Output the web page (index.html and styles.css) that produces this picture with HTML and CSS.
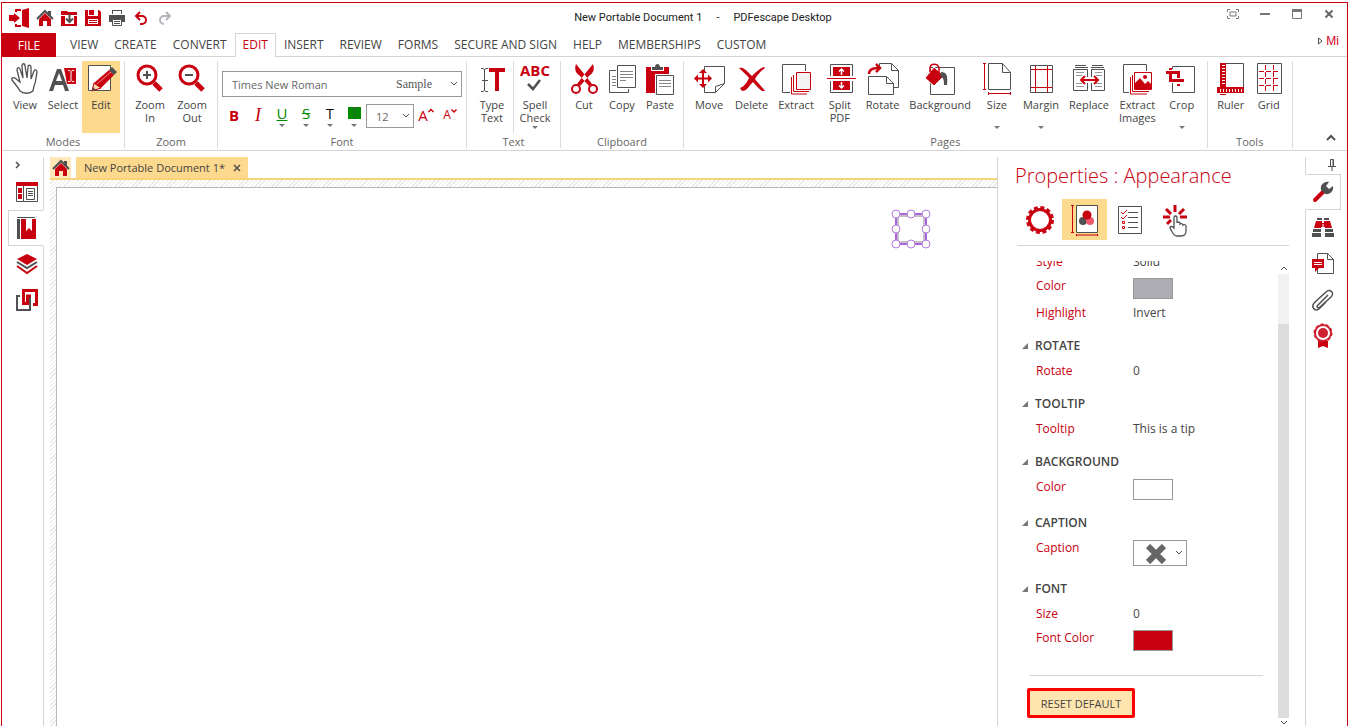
FILE: index.html
```html
<!DOCTYPE html>
<html lang="en">
<head>
    <meta charset="UTF-8">
    <meta name="viewport" content="width=device-width, initial-scale=1.0">
    <title>New Portable Document 1 - PDFescape Desktop</title>
    <link rel="stylesheet" href="styles.css">
</head>
<body>
<div class="window">
    <header class="titlebar">
        <div class="quick">
            <button class="quick-btn wide" aria-label="Exit"><svg width="20" height="20" viewBox="0 0 20 20"><path class="rf" d="M13 2l7-2v20l-7-2z"/><path class="rf" d="M0 7h5V5l6 5-6 5v-2H0z"/><path class="r" d="M7 4V2h5M7 16v2h5" stroke-width="2"/></svg></button>
            <button class="quick-btn" aria-label="Home"><svg width="18" height="18" viewBox="0 0 18 18"><path class="gf" d="M12 2h3v5h-3z"/><path class="rf" d="M3 10l6-6 6 6v7h-4v-5H7v5H3z"/><path class="g" d="M1 10l8-8 8 8" stroke-width="2"/></svg></button>
            <button class="quick-btn" aria-label="Open"><svg width="18" height="18" viewBox="0 0 18 18"><path class="rf" d="M1 2h6l1 1h9v3H1zM1 7h16v10H1z"/><path d="M5 6h9v9H5z" fill="#fff"/><path class="g" d="M9.500 5v8M6 9.500l3.500 3.500L13 9.500" stroke-width="2"/></svg></button>
            <button class="quick-btn" aria-label="Save"><svg width="16" height="16" viewBox="0 0 16 16"><path class="rf" d="M0 0h3v6h10V0h1l2 2v14H0z"/><path class="rf" d="M4 0h5v5H4z"/><path d="M3 9h10v5H3z" fill="#fff"/><path class="r" d="M4 10.500h8M4 12.500h8"/></svg></button>
            <button class="quick-btn" aria-label="Print"><svg width="16" height="16" viewBox="0 0 16 16"><path class="gf" d="M3 0h10v4H3zM0 5h16v7h-3V9H3v3H0z"/><path d="M4 1h8v3H4z" fill="#fff"/><path class="g" d="M3.500 9.500h9v6h-9zM5 11.500h6M5 13.500h6"/></svg></button>
            <button class="quick-btn" aria-label="Undo"><svg width="14" height="16" viewBox="0 0 14 16"><path class="r" d="M2 6h6a4 4 0 0 1 0 8H6M6 2L2 6l4 4" stroke-width="2"/></svg></button>
            <button class="quick-btn" aria-label="Redo"><svg width="14" height="16" viewBox="0 0 14 16"><path d="M12 6H6a4 4 0 0 0 0 8M8 2l4 4-4 4" fill="none" stroke="#b4b4ba" stroke-width="2"/></svg></button>
        </div>
        <div class="title"><span>New Portable Document 1</span><span>-</span><span>PDFescape Desktop</span></div>
        <div class="controls">
            <button class="control" aria-label="Full screen"><svg width="12" height="10" viewBox="0 0 12 10"><path d="M.5 3V.5H3M9 .5h2.500V3M11.500 7v2.500H9M3 9.500H.5V7M3 3h6v4H3z" fill="none" stroke="#777"/></svg></button>
            <button class="control" aria-label="Minimize"><svg width="10" height="10" viewBox="0 0 10 10"><path d="M0 4h10v2H0z" fill="#777"/></svg></button>
            <button class="control" aria-label="Maximize"><svg width="10" height="10" viewBox="0 0 10 10"><path d="M.5 2v7.500h9V2" fill="none" stroke="#777"/><path d="M0 0h10v3H0z" fill="#777"/></svg></button>
            <button class="control" aria-label="Close"><svg width="10" height="10" viewBox="0 0 10 10"><path d="M1.500 1.500l7 7M8.500 1.500l-7 7" stroke="#666" stroke-width="2"/></svg></button>
        </div>
    </header>

    <nav class="menu">
        <button class="file">FILE</button>
        <a class="tab" href="#view">VIEW</a>
        <a class="tab" href="#create">CREATE</a>
        <a class="tab" href="#convert">CONVERT</a>
        <a class="tab active" href="#edit">EDIT</a>
        <a class="tab" href="#insert">INSERT</a>
        <a class="tab" href="#review">REVIEW</a>
        <a class="tab" href="#forms">FORMS</a>
        <a class="tab" href="#secure">SECURE AND SIGN</a>
        <a class="tab" href="#help">HELP</a>
        <a class="tab" href="#memberships">MEMBERSHIPS</a>
        <a class="tab" href="#custom">CUSTOM</a>
        <button class="account"><svg width="5" height="8" viewBox="0 0 5 8"><path class="g" d="M.5 1l3.500 3L.5 7z"/></svg>Mi</button>
    </nav>

    <section class="ribbon">
        <div class="group">
            <div class="tools">
                <button class="tool"><svg width="32" height="32" viewBox="0 0 32 32"><path class="g" d="M11 28C9 24 6 21 3 17c-1-2 1-3 3-2l5 4L8 7c0-3 2-3 3-1l3 9-1-12c0-3 3-3 3 0l2 12 1-11c0-3 3-2 3 0v12l3-8c1-2 3-1 3 1-1 5-1 10-3 14l-1 5c-3 3-10 3-13 0z" stroke-width="1.300"/></svg>View</button>
                <button class="tool"><svg width="32" height="32" viewBox="0 0 32 32"><path class="gf" d="M2 28L10 6h4l8 22h-4l-2-6H8l-2 6zM9 18h6l-3-8z"/><path class="rf" d="M17 5h12v16h-9z"/><path d="M21 7.500h2l1 1 1-1h2M24 8.500v9M21 18.500h2l1-1 1 1h2" fill="none" stroke="#fff"/></svg>Select</button>
                <button class="tool selected"><svg width="32" height="32" viewBox="0 0 32 32"><path d="M3.500 2.500h22v25h-22z" fill="#fff" stroke="#505050"/><path class="rf" d="M9 20L24 7l5 5-13 13-9 3z"/><path d="M9 20l7 5-9 3z" fill="#f8d9a9" stroke="#c8000f"/><path class="gf" d="M24 7l3-3 5 5-3 3zM7 28l1-4 3 3z"/><path d="M12 21L26 9" stroke="#f7888d"/></svg>Edit</button>
            </div>
            <div class="group-name">Modes</div>
        </div>
        <div class="group roomy">
            <div class="tools">
                <button class="tool"><svg width="32" height="32" viewBox="0 0 32 32"><circle class="r" cx="13" cy="12" r="9" stroke-width="3"/><path class="r" d="M20 20l7 7" stroke-width="5"/><path class="g" d="M9 12h8M13 8v8" stroke-width="2"/></svg>Zoom<br>In</button>
                <button class="tool"><svg width="32" height="32" viewBox="0 0 32 32"><circle class="r" cx="13" cy="12" r="9" stroke-width="3"/><path class="r" d="M20 20l7 7" stroke-width="5"/><path class="g" d="M9 12h8" stroke-width="2"/></svg>Zoom<br>Out</button>
            </div>
            <div class="group-name">Zoom</div>
        </div>
        <div class="group font-group">
            <div class="font-tools">
                <div class="combo">
                    <select class="combo-select" aria-label="Font family"><option>Times New Roman</option></select>
                    <span class="sample">Sample</span>
                    <svg class="combo-arrow" width="8" height="6" viewBox="0 0 8 6"><path class="g" d="M1 1l3 3 3-3"/></svg>
                </div>
                <div class="styles">
                    <button class="style bold">B</button>
                    <button class="style italic">I</button>
                    <button class="style green"><u>U</u><i class="drop"></i></button>
                    <button class="style green"><s>S</s><i class="drop"></i></button>
                    <button class="style dark">T<i class="drop"></i></button>
                    <button class="style" aria-label="Highlight color"><svg width="13" height="20" viewBox="0 0 13 20"><path d="M0 2h13v12H0z" fill="#008a00"/><path d="M4 3h5M6.500 3v10" stroke="#2c662c"/></svg><i class="drop"></i></button>
                    <div class="combo size-combo">
                        <select class="combo-select" aria-label="Font size"><option>12</option></select>
                        <svg class="combo-arrow" width="8" height="6" viewBox="0 0 8 6"><path class="g" d="M1 1l3 3 3-3"/></svg>
                    </div>
                    <button class="style scale">A<svg width="6" height="6" viewBox="0 0 6 6"><path class="r" d="M.5 4L3 1.500 5.500 4" stroke-width="1.500"/></svg></button>
                    <button class="style scale small">A<svg width="6" height="6" viewBox="0 0 6 6"><path class="r" d="M.5 1.500L3 4l2.500-2.500" stroke-width="1.500"/></svg></button>
                </div>
            </div>
            <div class="group-name">Font</div>
        </div>
        <div class="group roomy">
            <div class="tools">
                <button class="tool divided"><svg width="32" height="32" viewBox="0 0 32 32"><path class="g" d="M5 5.500h2l1.500 1 1.500-1h2M8.500 6v21M5 28.500h2l1.500-1 1.500 1h2M6 17.500h6"/><path class="rf" d="M13 5h16v4h-6v19h-4V9h-6z"/></svg>Type<br>Text</button>
                <button class="tool"><svg width="32" height="32" viewBox="0 0 32 32"><text class="abc" x="16" y="13" text-anchor="middle">ABC</text><path class="g" d="M9 21l5 5 7-9" stroke-width="2.500"/></svg>Spell<br>Check<i class="drop"></i></button>
            </div>
            <div class="group-name">Text</div>
        </div>
        <div class="group">
            <div class="tools">
                <button class="tool"><svg width="32" height="32" viewBox="0 0 32 32"><path class="rf" d="M8 1c-2 6 0 9 4 12l9 10 3-2-7-9zM25 1c2 6 0 9-4 12l-9 10-3-2 7-9z"/><circle class="r" cx="8" cy="26" r="4" stroke-width="2"/><circle class="r" cx="25" cy="26" r="4" stroke-width="2"/><circle cx="16.500" cy="15.500" r="1" fill="#fff"/></svg>Cut</button>
                <button class="tool"><svg width="32" height="32" viewBox="0 0 32 32"><path class="g p" d="M3.500 7.500h19v22h-19z"/><path class="g" d="M6 13.500h5M6 16.500h5M6 19.500h5M6 22.500h5" opacity=".7"/><path d="M10 1h21v25H10z" fill="#fff"/><path class="g p" d="M11.500 2.500h18v22h-18z"/><path class="g" d="M14 8.500h13M14 11.500h13M14 14.500h13M14 17.500h6" opacity=".7"/></svg>Copy</button>
                <button class="tool"><svg width="32" height="32" viewBox="0 0 32 32"><path class="rf" d="M2 4h23v26H2z"/><path d="M7 3h13v5H7z" fill="#fff"/><path class="gf" d="M8 4h3c0-4 5-4 5 0h3v3H8z"/><path d="M11 11h21v21H11z" fill="#fff"/><path class="g p" d="M12.500 12.500h17v19h-17z"/><path class="g" d="M15 17.500h12M15 20.500h12M15 23.500h12" opacity=".7"/></svg>Paste</button>
            </div>
            <div class="group-name">Clipboard</div>
        </div>
        <div class="group roomy">
            <div class="tools">
                <button class="tool"><svg width="32" height="32" viewBox="0 0 32 32"><path class="g p" d="M11.500 3.500h20v17l-9 9h-11zM22.500 29.500v-6l9-3z"/><path d="M0 8h20v14H0z" fill="#fff"/><path class="r" d="M10 8v16M2 15.500h16" stroke-width="2"/><path class="rf" d="M10 6l4 4H6zM10 25l4-4H6zM1 15.500l4-4v8zM19 15.500l-4-4v8z"/></svg>Move</button>
                <button class="tool"><svg width="32" height="32" viewBox="0 0 32 32"><path class="rf" d="M3 5c4-1 6 1 13 8 4-4 8-8 12-9l1 1c-4 3-7 6-10 11 3 4 7 8 10 12h-3c-3-2-6-6-9-9-4 4-6 9-11 9l-2-3c5-2 7-6 9-10C10 11 6 8 3 5z"/></svg>Delete</button>
                <button class="tool"><svg width="32" height="32" viewBox="0 0 32 32"><path class="g p" d="M2.500 1.500h23v28h-23z"/><path d="M10 12h4V8h18v24H10z" fill="#fff"/><path class="r" d="M11.500 14v17H27M13.500 12v16.500H29M16.500 9.500h14v17h-14z"/><path d="M17 10h13v16H17z" fill="#f4f4f4"/></svg>Extract</button>
                <button class="tool"><svg width="32" height="32" viewBox="0 0 32 32"><path class="g p" d="M6.500 1.500h22v28h-22z"/><path class="rf" d="M9 4h17v9H9zM9 18h17v9H9z"/><path d="M3 13h29v5H3z" fill="#fff"/><path class="rf" d="M3 15h29v1H3z"/><path d="M17.500 12V6M15 8.500L17.500 6 20 8.500M17.500 19v6M15 22.500l2.500 2.500 2.500-2.500" fill="none" stroke="#fff" stroke-width="1.500"/></svg>Split<br>PDF</button>
                <button class="tool"><svg width="32" height="32" viewBox="0 0 32 32"><path class="g p" d="M12.500.5h12l7 7v17h-19zM24.500.5v7h7"/><path d="M1 3h14v10H1z" fill="#fff"/><path class="g p" d="M1.500 13.500h18l7 7v11h-25zM19.500 13.500v7h7"/><path class="r" d="M2 11c0-4 3-6 9-6" stroke-width="2.500"/><path class="r" d="M9 1l4 4-4 4" stroke-width="2.500"/></svg>Rotate</button>
                <button class="tool"><svg width="32" height="32" viewBox="0 0 32 32"><path class="g p" d="M6.500 4.500h24v27h-24z"/><path class="rf" d="M10 4l10 9-10 10L1 15z" stroke="#fff"/><path class="r" d="M6 9V5c0-5 8-5 9 0v7" stroke-width="1.500"/><path class="gf" d="M17 9c6 0 7 4 6 13h-3c0-4 0-7-4-9z"/></svg>Background</button>
                <button class="tool"><svg width="32" height="32" viewBox="0 0 32 32"><path class="g p" d="M7.500.5h14l8 9v17h-22zM21.500.5v9h8"/><path class="r" d="M2 .5h3M3.500.5v26M2 26.500h3M7.500 29v3M7.500 30.500h22M29.500 29v3"/></svg>Size<i class="drop low"></i></button>
                <button class="tool"><svg width="32" height="32" viewBox="0 0 32 32"><path class="g p" d="M5.500 2.500h22v27h-22z"/><path class="r" d="M10.500 3v26M22.500 3v26M6 6.500h21M6 24.500h21"/></svg>Margin<i class="drop low"></i></button>
                <button class="tool"><svg width="32" height="32" viewBox="0 0 32 32"><path class="g" d="M.5 6.500h14v21H.5zM18.500 6.500h13v21h-13zM2 2.500h11M2 4.500h13M19 2.500h11M18 4.500h13"/><path class="g" d="M3 9.500h8M3 12.500h6M22 9.500h7M23 12.500h6M3 20.500h6M23 20.500h6M3 23.500h8M22 23.500h7" opacity=".6"/><path d="M11 17h10" stroke="#fff" stroke-width="6"/><path class="r" d="M9 17h15M12 13l-4 4 4 4M21 13l4 4-4 4" stroke-width="2"/></svg>Replace</button>
                <button class="tool"><svg width="32" height="32" viewBox="0 0 32 32"><path class="g p" d="M2.500 1.500h23v28h-23z"/><path d="M8 12h4V8h20v24H8z" fill="#fff"/><path class="r" d="M9.500 14v17H26M11.500 12v16.500H28M13.500 9.500h17v17h-17z"/><path class="rf" d="M14 20l5-5 5 6 3-3 4 4v4H14z"/><circle class="rf" cx="24" cy="14" r="2"/></svg>Extract<br>Images</button>
                <button class="tool"><svg width="32" height="32" viewBox="0 0 32 32"><path class="g p" d="M6.500 3.500h22v26h-22z"/><path d="M0 6h17v14H3z" fill="#fff"/><path class="r" d="M0 9.500h12.500V15M12.500 21v2M4.500 5v2M4.500 11v6.500H18" stroke-width="3"/></svg>Crop<i class="drop low"></i></button>
            </div>
            <div class="group-name">Pages</div>
        </div>
        <div class="group">
            <div class="tools">
                <button class="tool"><svg width="32" height="32" viewBox="0 0 32 32"><path class="g" d="M10.500.5h18v25"/><path class="rf" d="M5 0h6v24h18v6H2v-6h3z"/><path d="M8.500 2v21" stroke="#fff" stroke-width="3" stroke-dasharray="1 2"/><path d="M5 27.500h22" stroke="#fff" stroke-width="3" stroke-dasharray="1 2"/><path class="r" d="M5 31.500h6"/></svg>Ruler</button>
                <button class="tool"><svg width="32" height="32" viewBox="0 0 32 32"><path class="g p" d="M4.500.5h24v30h-24z"/><path class="r" d="M12.500 2v27M20.500 2v27M6 8.500h21M6 15.500h21M6 22.500h21" stroke-dasharray="5 2"/></svg>Grid</button>
            </div>
            <div class="group-name">Tools</div>
        </div>
        <button class="collapse" aria-label="Collapse ribbon"><svg width="10" height="7" viewBox="0 0 10 7"><path class="g" d="M1 6l4-4 4 4" stroke-width="2"/></svg></button>
    </section>

    <main class="workspace">
        <aside class="rail left-rail">
            <button class="rail-top" aria-label="Expand"><svg width="6" height="8" viewBox="0 0 6 8"><path class="g" d="M1 1l3 3-3 3" stroke-width="1.500"/></svg></button>
            <button class="rail-btn" aria-label="Pages"><svg width="24" height="24" viewBox="0 0 24 24"><path class="g" d="M1.500 3v18.500h21V3M8.500 5v16"/><path class="rf" d="M1 2h22v4H1zM3 8h4v5H3zM3 14h4v5H3z"/><path class="g" d="M11.500 8.500h8v11h-8zM13 11.500h5M13 13.500h5M13 15.500h5"/></svg></button>
            <button class="rail-btn current" aria-label="Bookmarks"><svg width="24" height="24" viewBox="0 0 24 24"><path class="gf" d="M2 1h18v1H2zM2 3h3v20H2z"/><path class="rf" d="M6 3h5v12l3-3 3 3V3h4v20H6z"/></svg></button>
            <button class="rail-btn" aria-label="Layers"><svg width="24" height="24" viewBox="0 0 24 24"><path class="rf" d="M12 2l10 5-10 6L2 7z"/><path class="g" d="M2 10l10 6 10-6" stroke-width="2"/><path class="r" d="M2 14l10 7 10-7" stroke-width="2"/></svg></button>
            <button class="rail-btn" aria-label="Attachments"><svg width="24" height="24" viewBox="0 0 24 24"><path class="g" d="M5 8H2v14h13V9h-3" stroke-width="2"/><path class="r" d="M8.500 17V2.500h13v14H18M8.500 15.500h4V8H16" stroke-width="3"/></svg></button>
        </aside>

        <section class="document">
            <div class="doc-tabs">
                <button class="home-tab" aria-label="Home"><svg width="18" height="18" viewBox="0 0 18 18"><path class="gf" d="M12 2h3v5h-3z"/><path class="rf" d="M3 10l6-6 6 6v7h-4v-5H7v5H3z"/><path class="g" d="M1 10l8-8 8 8" stroke-width="2"/></svg></button>
                <div class="doc-tab"><span>New Portable Document 1*</span><button class="close-tab" aria-label="Close tab"><svg width="8" height="8" viewBox="0 0 8 8"><path class="g" d="M1 1l6 6M7 1L1 7" stroke-width="1.500"/></svg></button></div>
            </div>
            <div class="canvas">
                <div class="page">
                    <svg class="checkbox-field" width="44" height="44" viewBox="0 0 44 44">
                        <path d="M8.500 8.500h27v27h-27z" fill="#fff" stroke="#c4c0c8" stroke-width="3"/>
                        <path d="M7 7h30v30H7z" fill="none" stroke="#ab62dc" stroke-width="2"/>
                        <g fill="#fff" stroke="#b37be0">
                            <circle cx="7" cy="7" r="4"/><circle cx="22" cy="7" r="4"/><circle cx="37" cy="7" r="4"/>
                            <circle cx="7" cy="22" r="4"/><circle cx="37" cy="22" r="4"/>
                            <circle cx="7" cy="37" r="4"/><circle cx="22" cy="37" r="4"/><circle cx="37" cy="37" r="4"/>
                        </g>
                    </svg>
                </div>
            </div>
        </section>

        <aside class="properties">
            <h1 class="prop-title">Properties : Appearance</h1>
            <div class="prop-tabs">
                <button class="prop-tab" aria-label="General"><svg width="32" height="32" viewBox="0 0 32 32"><circle class="r" cx="16" cy="16" r="12.500" stroke-width="3" stroke-dasharray="3.927 2.618"/><circle class="r" cx="16" cy="16" r="10.500" stroke-width="3"/></svg></button>
                <button class="prop-tab on" aria-label="Appearance"><svg width="32" height="32" viewBox="0 0 32 32"><path d="M7.500 1.500h21v27h-21z" fill="#fff" stroke="#505050"/><circle class="gf" cx="14" cy="17" r="4"/><circle cx="21" cy="17" r="4" fill="#f0566a"/><circle class="rf" cx="18" cy="11" r="4.500"/><path class="r" d="M2 1.500h3M3.500 1.500v27M2 28.500h3M7.500 30v2M7.500 31h21M28.500 30v2"/></svg></button>
                <button class="prop-tab" aria-label="Options"><svg width="32" height="32" viewBox="0 0 32 32"><path class="g p" d="M4.500 2.500h23v27h-23z"/><path class="g" d="M14 8.500h10M14 13.500h10M14 18.500h10M14 23.500h10"/><path class="r" d="M7 8l2 2 4-4M7 13l2 2 4-4M8.500 17.500h2v2h-2zM8.500 22.500h2v2h-2z"/></svg></button>
                <button class="prop-tab" aria-label="Actions"><svg width="32" height="34" viewBox="0 0 32 34"><path class="r" d="M16 2v7M7 6l5 5M25 6l-5 5M4 14h7M21 14h7M8 21l4-4" stroke-width="3"/><path d="M15 25V14.500c0-2 3-2 3 0V20c0-1 3-1 3 0v1c1-1 3 0 3 1 1-1 3 0 3 1v5c0 4-3 5-5 5h-4c-4 0-5-5-7-8 0-2 2-2 4 0z" fill="#fff" stroke="#505050" stroke-width="1.300"/></svg></button>
            </div>
            <div class="prop-scroll">
                <form class="prop-list">
                    <div class="row first"><span class="name">Style</span><span>Solid</span></div>
                    <div class="row"><span class="name">Color</span><button type="button" class="swatch grey" aria-label="Border color"></button></div>
                    <div class="row"><span class="name">Highlight</span><span>Invert</span></div>
                    <h2 class="section">ROTATE</h2>
                    <div class="row"><span class="name">Rotate</span><span>0</span></div>
                    <h2 class="section">TOOLTIP</h2>
                    <div class="row"><span class="name">Tooltip</span><span>This is a tip</span></div>
                    <h2 class="section">BACKGROUND</h2>
                    <div class="row"><span class="name">Color</span><button type="button" class="swatch" aria-label="Background color"></button></div>
                    <h2 class="section">CAPTION</h2>
                    <div class="row"><label class="name" for="caption">Caption</label>
                        <div class="combo caption-combo">
                            <select class="combo-select" id="caption"><option label=" " value="cross"></option></select>
                            <svg class="caption-mark" width="20" height="20" viewBox="0 0 20 20"><path d="M2 2l16 16M18 2L2 18" stroke="#666" stroke-width="6"/></svg>
                            <svg class="combo-arrow" width="8" height="6" viewBox="0 0 8 6"><path class="g" d="M1 1l3 3 3-3"/></svg>
                        </div>
                    </div>
                    <h2 class="section">FONT</h2>
                    <div class="row"><span class="name">Size</span><span>0</span></div>
                    <div class="row"><span class="name">Font Color</span><button type="button" class="swatch red" aria-label="Font color"></button></div>
                    <hr class="rule">
                    <button type="button" class="reset">RESET DEFAULT</button>
                </form>
                <div class="scrollbar">
                    <svg width="8" height="6" viewBox="0 0 8 6"><path class="g" d="M1 5l3-3 3 3"/></svg>
                    <div class="track"><div class="thumb"></div></div>
                    <svg width="8" height="6" viewBox="0 0 8 6"><path class="g" d="M1 1l3 3 3-3"/></svg>
                </div>
            </div>
        </aside>

        <aside class="rail right-rail">
            <button class="rail-top" aria-label="Pin"><svg width="8" height="12" viewBox="0 0 8 12"><path class="g" d="M2.500 7V.5h3V7M0 7.500h8M4 8v4M5 1v6"/></svg></button>
            <button class="rail-btn current" aria-label="Properties"><svg width="24" height="24" viewBox="0 0 24 24"><path class="r" d="M4 20l8-8" stroke-width="4" stroke-linecap="round"/><path class="gf" d="M10 10c-1-5 3-9 8-8l-3 4 3 3 4-3c1 5-3 9-8 8z"/></svg></button>
            <button class="rail-btn" aria-label="Search"><svg width="24" height="24" viewBox="0 0 24 24"><path class="gf" d="M6 2h5v2H6zM13 2h5v2h-5zM2 13h8v3H2zM14 13h8v3h-8zM1 17h9v4H1zM14 17h9v4h-9z"/><path class="rf" d="M5 5h6v2h2V5h6l2 7H14v-1h-4v1H3z"/><path d="M12 8v3" stroke="#fff"/></svg></button>
            <button class="rail-btn" aria-label="Comments"><svg width="24" height="24" viewBox="0 0 24 24"><path class="g p" d="M6.500 1.500h10l6 6v14h-16zM16.500 1.500v6h6"/><path class="rf" d="M1 7h12v9H8l-4 4v-4H1z"/><path d="M3 10.500h8M3 12.500h8" stroke="#fff"/></svg></button>
            <button class="rail-btn" aria-label="Attachments"><svg width="24" height="24" viewBox="0 0 24 24"><path class="g" d="M17 7L7 17c-2 2 0 4 2 2l11-10c4-4-1-9-5-5L4 14c-5 5 0 10 4 7l7-7" stroke-width="1.500"/></svg></button>
            <button class="rail-btn" aria-label="Signatures"><svg width="24" height="26" viewBox="0 0 24 26"><path class="rf" d="M7 18h10v7l-5-2-5 2z"/><circle cx="12" cy="10" r="8" fill="#fff" stroke="#cf2030" stroke-width="2"/><circle class="r" cx="12" cy="10" r="9" stroke-dasharray="3 2.650"/><circle cx="12" cy="10" r="5" fill="#cf2030"/></svg></button>
        </aside>
    </main>
</div>
</body>
</html>
```
FILE: styles.css
```css
* {
    box-sizing: border-box;
}

body {
    margin: 0;
    font-family: "Open Sans", "Noto Sans", sans-serif;
    font-size: 12px;
    color: #444;
    background-color: #fff;
    overflow: hidden;
}

button {
    font: inherit;
    color: inherit;
    background: none;
    border: none;
    padding: 0;
    cursor: pointer;
}

svg {
    display: block;
    flex: none;
}

/* icon colours */
.r {
    fill: none;
    stroke: #c8000f;
}

.rf {
    fill: #c8000f;
}

.g {
    fill: none;
    stroke: #505050;
}

.gf {
    fill: #505050;
}

.p {
    fill: #fff;
}

.window {
    display: flex;
    flex-direction: column;
    height: calc(100vh - 2px);
    margin: 2px 2px 0 1px;
    border: 1px solid #c8000f;
    border-bottom: none;
}

/* title bar */
.titlebar {
    display: flex;
    height: 30px;
}

.quick {
    display: flex;
    padding-left: 2px;
}

.quick-btn {
    display: flex;
    align-items: center;
    justify-content: center;
    width: 24px;
}

.quick-btn.wide {
    width: 29px;
}

.title {
    flex: 1;
    display: flex;
    justify-content: center;
    align-items: center;
    gap: 14px;
    padding: 0 0 2px 12px;
    font-family: Roboto, sans-serif;
    font-size: 11px;
    color: #222;
}

.controls {
    display: flex;
    padding: 0 2px 8px 0;
}

.control {
    display: flex;
    align-items: center;
    justify-content: center;
    width: 32px;
}

/* menu */
.menu {
    display: flex;
    height: 24px;
    border-bottom: 1px solid #d4d4d4;
}

.file {
    width: 54px;
    height: 24px;
    margin-right: 6px;
    background-color: #c8000f;
    color: #fff;
}

.tab {
    height: 24px;
    padding: 0 7px;
    line-height: 22px;
    border: 1px solid transparent;
    border-bottom: none;
    color: #444;
    text-decoration: none;
}

.tab.active {
    background-color: #fff;
    border-color: #d4d4d4;
    color: #c8000f;
}

.account {
    display: flex;
    align-items: center;
    gap: 3px;
    height: 16px;
    margin-left: auto;
    padding-right: 8px;
    font-family: "Liberation Sans", Arial, sans-serif;
    color: #d4001a;
}

/* ribbon */
.ribbon {
    display: flex;
    height: 94px;
    padding: 4px 0 2px;
    border-bottom: 1px solid #d4d4d4;
    font-size: 11px;
}

.group {
    display: flex;
    flex-direction: column;
    justify-content: space-between;
    padding: 0 4px;
    border-right: 1px solid #dcdcdc;
}

.group-name {
    line-height: 12px;
    text-align: center;
    color: #666;
}

.tools {
    display: flex;
}

.tool {
    position: relative;
    display: flex;
    flex-direction: column;
    align-items: center;
    height: 72px;
    padding: 2px 3px 0;
    line-height: 13px;
}

.roomy .tool {
    padding: 2px 5px 0;
}

.tool svg {
    margin-bottom: 3px;
    overflow: visible;
}

.tool.selected {
    background-color: #fdd98d;
}

.tool.divided {
    border-right: 1px solid #dcdcdc;
}

.drop {
    position: absolute;
    left: calc(50% - 3px);
    bottom: 4px;
    border: 3px solid transparent;
    border-top-color: #777;
    border-bottom: none;
}

.abc {
    font-size: 15px;
    font-weight: 700;
    fill: #c8000f;
}

.font-tools {
    width: 240px;
    padding-top: 10px;
}

.combo {
    position: relative;
    height: 26px;
    border: 1px solid #999;
}

.combo-select {
    width: 100%;
    height: 100%;
    padding: 0 9px;
    appearance: none;
    border: none;
    background: none;
    font: inherit;
    font-size: 11px;
    color: #666;
}

.combo-arrow {
    position: absolute;
    right: 3px;
    top: calc(50% - 3px);
    pointer-events: none;
}

.sample {
    position: absolute;
    right: 29px;
    top: 5px;
    font-family: "Liberation Serif", serif;
    font-size: 12px;
    color: #555;
    pointer-events: none;
}

.styles {
    display: flex;
    align-items: center;
    margin-top: 7px;
}

.style {
    position: relative;
    width: 24px;
    height: 24px;
    padding-bottom: 2px;
    font-size: 15px;
    line-height: 20px;
    display: flex;
    align-items: center;
    justify-content: center;
    color: #c8000f;
}

.style .drop {
    bottom: 1px;
}

.style.green,
.style.dark {
    padding-bottom: 6px;
}

.bold {
    font-weight: 700;
}

.italic {
    font-family: "Liberation Serif", serif;
    font-style: italic;
    font-size: 18px;
}

.green {
    color: #008a00;
}

.dark {
    color: #111;
}

.size-combo {
    width: 48px;
    height: 24px;
}

.scale svg {
    align-self: flex-start;
    margin-top: 4px;
}

.small {
    font-size: 12px;
}

.collapse {
    align-self: flex-end;
    margin-left: auto;
    padding: 0 11px 7px;
}

/* side rails */
.workspace {
    flex: 1;
    display: flex;
    min-height: 0;
    padding-top: 6px;
}

.rail {
    flex: none;
    width: 42px;
}

.left-rail {
    padding-left: 6px;
    border-right: 1px solid #d4d4d4;
}

.right-rail {
    border-left: 1px solid #d4d4d4;
}

.rail-top {
    display: flex;
    align-items: center;
    justify-content: center;
    width: 20px;
    height: 15px;
}

.right-rail .rail-top {
    margin-left: 16px;
}

.rail-btn {
    display: flex;
    align-items: center;
    justify-content: center;
    width: 36px;
    height: 36px;
    border: 1px solid transparent;
}

.left-rail .rail-btn {
    padding-left: 2px;
}

.right-rail .rail-btn {
    margin-left: -1px;
}

.rail-top + .rail-btn {
    margin-top: 2px;
}

.rail-btn.current {
    background-color: #fff;
    border-color: #d4d4d4;
}

.left-rail .current {
    border-right-color: #fff;
}

.right-rail .current {
    border-left-color: #fff;
}

/* document */
.document {
    flex: 1;
    display: flex;
    flex-direction: column;
    min-width: 0;
    margin-left: 6px;
}

.doc-tabs {
    display: flex;
    gap: 5px;
    border-bottom: 2px solid #f9d27c;
}

.home-tab {
    width: 21px;
    height: 21px;
    display: flex;
    align-items: center;
    justify-content: center;
    background-color: #fee7b8;
}

.doc-tab {
    display: flex;
    align-items: center;
    gap: 8px;
    padding: 0 7px 0 8px;
    background-color: #fdd98d;
    font-size: 11px;
}

.canvas {
    flex: 1;
    display: flex;
    padding: 7px 0 0 6px;
    background: repeating-linear-gradient(135deg, #fff 0 2px, #e8e8e8 2px 3px);
}

.page {
    flex: 1;
    position: relative;
    background-color: #fff;
    border: 1px solid #b8b8b8;
    border-width: 1px 0 0 1px;
}

.checkbox-field {
    position: absolute;
    right: 64px;
    top: 19px;
}

/* properties panel */
.properties {
    flex: none;
    display: flex;
    flex-direction: column;
    width: 308px;
    padding: 0 16px 0 17px;
    border-left: 1px solid #d4d4d4;
}

.prop-title {
    margin: 0;
    height: 42px;
    font-size: 20px;
    font-weight: 300;
    line-height: 38px;
    color: #c8000f;
    white-space: nowrap;
}

.prop-tabs {
    display: flex;
    height: 47px;
    margin-left: 2px;
    border-bottom: 1px solid #d4d4d4;
}

.prop-tab {
    display: flex;
    align-items: center;
    justify-content: center;
    width: 45px;
    height: 41px;
}

.prop-tab.on {
    background-color: #fdd98d;
}

.prop-scroll {
    flex: 1;
    display: flex;
    min-height: 0;
    margin-top: 15px;
}

.prop-list {
    flex: 1;
    overflow: hidden;
    padding-left: 12px;
}

.row {
    display: flex;
    align-items: flex-start;
    padding-left: 9px;
    line-height: 24px;
}

/* the list stands scrolled half a row down */
.row.first {
    margin-top: -11px;
}

.name {
    width: 97px;
    color: #c8000f;
}

.section {
    display: flex;
    align-items: center;
    gap: 7px;
    margin: 9px 0 1px -5px;
    font-size: 12px;
    font-weight: 600;
    line-height: 24px;
}

.section::before {
    content: "";
    border: 3px solid #777;
    border-left-color: transparent;
    border-top-color: transparent;
}

.swatch {
    width: 40px;
    height: 21px;
    margin: 4px 0 2px;
    border: 1px solid #999;
    background-color: #fff;
}

.swatch.grey {
    background-color: #acacb2;
}

.swatch.red {
    background-color: #c8000f;
}

.caption-combo {
    width: 54px;
    margin: 4px 0 2px;
}

.caption-mark {
    position: absolute;
    left: 12px;
    top: 3px;
    pointer-events: none;
}

.rule {
    margin: 22px 15px 12px 3px;
    border: none;
    border-top: 1px solid #d4d4d4;
}

.reset {
    width: 108px;
    height: 30px;
    border: 3px solid #f00;
    border-radius: 2px;
    background-color: #fee5b0;
    font-size: 11px;
}

.scrollbar {
    display: flex;
    flex-direction: column;
    align-items: center;
    width: 11px;
    padding-top: 4px;
}

.track {
    flex: 1;
    width: 11px;
    margin: 3px 0 2px;
    padding-top: 50px;
    background-color: #f1f1f1;
}

.thumb {
    height: 100%;
    background-color: #dcdcdc;
}
```
